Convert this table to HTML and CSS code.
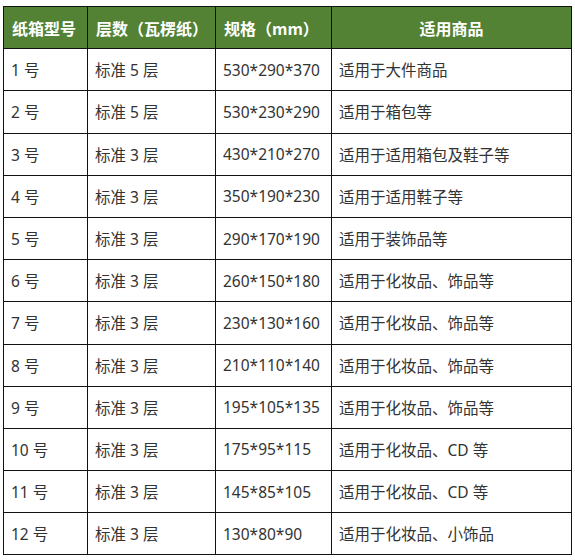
FILE: index.html
```html
<!DOCTYPE html>
<html lang="zh">
<head>
<meta charset="utf-8">
<link rel="stylesheet" href="styles.css">
</head>
<body>
<table class="spec">
  <colgroup>
    <col class="c1"><col class="c2"><col class="c3"><col class="c4">
  </colgroup>
  <thead>
    <tr><th>纸箱型号</th><th>层数（瓦楞纸）</th><th>规格（mm）</th><th class="center">适用商品</th></tr>
  </thead>
  <tbody>
    <tr><td>1 号</td><td>标准 5 层</td><td>530*290*370</td><td>适用于大件商品</td></tr>
    <tr><td>2 号</td><td>标准 5 层</td><td>530*230*290</td><td>适用于箱包等</td></tr>
    <tr><td>3 号</td><td>标准 3 层</td><td>430*210*270</td><td>适用于适用箱包及鞋子等</td></tr>
    <tr><td>4 号</td><td>标准 3 层</td><td>350*190*230</td><td>适用于适用鞋子等</td></tr>
    <tr><td>5 号</td><td>标准 3 层</td><td>290*170*190</td><td>适用于装饰品等</td></tr>
    <tr><td>6 号</td><td>标准 3 层</td><td>260*150*180</td><td>适用于化妆品、饰品等</td></tr>
    <tr><td>7 号</td><td>标准 3 层</td><td>230*130*160</td><td>适用于化妆品、饰品等</td></tr>
    <tr><td>8 号</td><td>标准 3 层</td><td>210*110*140</td><td>适用于化妆品、饰品等</td></tr>
    <tr><td>9 号</td><td>标准 3 层</td><td>195*105*135</td><td>适用于化妆品、饰品等</td></tr>
    <tr><td>10 号</td><td>标准 3 层</td><td>175*95*115</td><td>适用于化妆品、CD 等</td></tr>
    <tr><td>11 号</td><td>标准 3 层</td><td>145*85*105</td><td>适用于化妆品、CD 等</td></tr>
    <tr><td>12 号</td><td>标准 3 层</td><td>130*80*90</td><td>适用于化妆品、小饰品</td></tr>
  </tbody>
</table>
</body>
</html>
```
FILE: styles.css
```css
html, body {
  margin: 0;
  padding: 0;
  background: #ffffff;
}
body {
  font-family: "Noto Sans", "Noto Sans CJK SC", sans-serif;
}
.spec {
  margin: 6px 0 0 3px;
  border-collapse: collapse;
  table-layout: fixed;
  width: 568px;
  border: 1px solid #111;
}
.c1 { width: 84px; }
.c2 { width: 128px; }
.c3 { width: 116px; }
.c4 { width: 240px; }
.spec th,
.spec td {
  border: 1px solid #111;
  height: 42.2px;
  padding: 0 0 0 7px;
  text-align: left;
  vertical-align: middle;
  white-space: nowrap;
  box-sizing: border-box;
}
.spec th {
  background: #548235;
  color: #ffffff;
  font-family: "Noto Sans CJK SC", sans-serif;
  font-size: 16px;
  font-weight: bold;
  padding-left: 8px;
}
.spec th.center {
  text-align: center;
  padding-left: 0;
}
.spec td {
  font-size: 15.5px;
  color: #333333;
}
```
